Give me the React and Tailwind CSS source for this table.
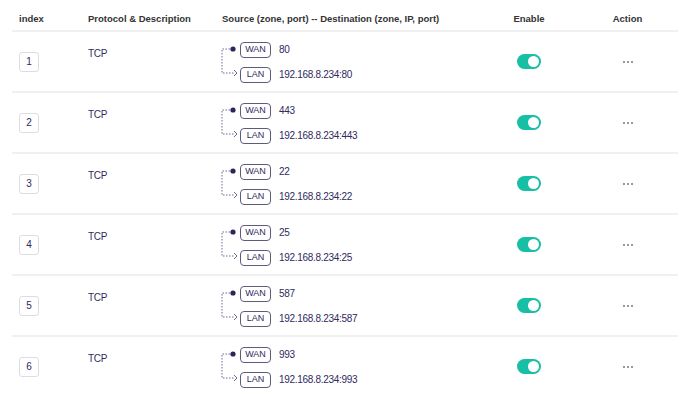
const rules = [
  { id: 1, src: '80', dst: '192.168.8.234:80' },
  { id: 2, src: '443', dst: '192.168.8.234:443' },
  { id: 3, src: '22', dst: '192.168.8.234:22' },
  { id: 4, src: '25', dst: '192.168.8.234:25' },
  { id: 5, src: '587', dst: '192.168.8.234:587' },
  { id: 6, src: '993', dst: '192.168.8.234:993' },
];

const cols = 'grid grid-cols-[69px_133px_266px_98px_99px]';

function Connector() {
  return (
    <svg width="20" height="36" viewBox="0 0 20 36" className="absolute left-[7px] top-0">
      <path d="M12 7 H1 V31 H14" fill="none" stroke="#6b6890" strokeWidth="1" strokeDasharray="1.5 1.5" />
      <circle cx="12" cy="7" r="2.6" fill="#2b2559" />
      <path d="M13 28 L16 31 L13 34" fill="none" stroke="#6b6890" strokeWidth="1" />
    </svg>
  );
}

function Toggle() {
  return (
    <div className="w-[24px] h-[15px] rounded-full bg-[#17bfa5] flex items-center justify-end pr-[2px]">
      <div className="w-[11px] h-[11px] rounded-full bg-white" />
    </div>
  );
}

export default function App() {
  return (
    <div className="w-[690px] h-[394px] bg-white px-3 text-[#2e2a5e]" style={{ fontFamily: '"Liberation Sans", Arial, sans-serif' }}>
      <div className={`${cols} h-[32px] pt-[12px] text-[9.5px] font-bold text-[#333] border-b-2 border-[#f0f0f0]`}>
        <div className="pl-[7px]">index</div>
        <div className="pl-[7px]">Protocol &amp; Description</div>
        <div className="pl-[8px]">Source (zone, port) -- Destination (zone, IP, port)</div>
        <div className="text-center">Enable</div>
        <div className="text-center">Action</div>
      </div>
      {rules.map((r) => (
        <div key={r.id} className={`${cols} h-[61px] items-center border-b-2 border-[#f0f0f0] text-[10px] tracking-[-0.3px]`}>
          <div className="pl-[7px]">
            <div className="w-[20px] h-[20px] rounded-[3px] border border-[#dcdce3] flex items-center justify-center">{r.id}</div>
          </div>
          <div className="pl-[7px] self-start pt-[14px]">TCP</div>
          <div className="relative pl-[7px] h-[40px]">
            <Connector />
            <div className="pl-[19px] flex flex-col gap-[9px]">
              <div className="flex items-center gap-2">
                <span className="w-[31px] h-[16px] rounded-[4px] border border-[#5f5b7e] flex items-center justify-center text-[9px] tracking-normal">WAN</span>
                <span>{r.src}</span>
              </div>
              <div className="flex items-center gap-2">
                <span className="w-[31px] h-[16px] rounded-[4px] border border-[#5f5b7e] flex items-center justify-center text-[9px] tracking-normal">LAN</span>
                <span>{r.dst}</span>
              </div>
            </div>
          </div>
          <div className="flex justify-center"><Toggle /></div>
          <div className="flex justify-center gap-[2px]">
            <span className="w-[2px] h-[2px] rounded-full bg-[#777]" />
            <span className="w-[2px] h-[2px] rounded-full bg-[#777]" />
            <span className="w-[2px] h-[2px] rounded-full bg-[#777]" />
          </div>
        </div>
      ))}
    </div>
  );
}
